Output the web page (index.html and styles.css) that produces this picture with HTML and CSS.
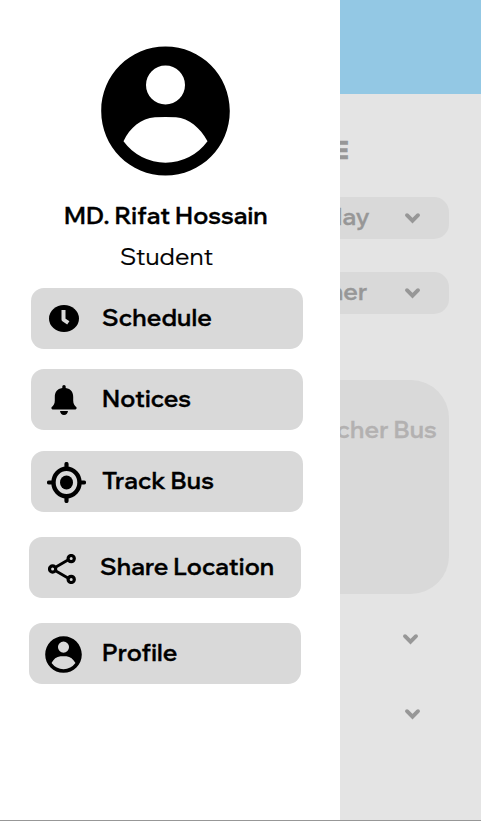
FILE: index.html
```html
<!DOCTYPE html>
<html lang="en">
<head>
<meta charset="utf-8">
<title>Bus Schedule</title>
<link rel="stylesheet" href="styles.css">
</head>
<body>
<svg width="0" height="0" class="defs">
  <symbol id="avatar" viewBox="0 0 129 130"><path fill-rule="evenodd" d="M64.5 .5C100 .5 128.8 29 128.800 65S100 129.500 64.500 129.500 .2 101 .2 65 29 .5 64.500 .5ZM64.500 19.500a19.500 19.500 0 1 0 0 39 19.500 19.500 0 1 0 0-39ZM54 71.300C40 72.500 29 81.500 22.500 95.300A52 52 0 0 0 106.500 95.300C99 81.500 88 72.500 75 71.300Q64.500 70.800 54 71.300Z"/></symbol>
  <symbol id="chevron" viewBox="0 0 17 12"><path d="M3 3.200 8.500 8.700 14 3.200" fill="none" stroke="currentColor" stroke-width="3.900" stroke-linecap="round"/></symbol>
</svg>
<div class="app">
  <aside class="drawer">
    <svg class="portrait"><use href="#avatar"/></svg>
    <h1 class="name">MD. Rifat Hossain</h1>
    <p class="role">Student</p>
    <nav class="menu">
      <a class="item schedule"><span class="icon"><svg width="30" height="27" viewBox="0 0 30 27"><ellipse cx="15" cy="13.500" rx="15" ry="13.500"/><path d="M14.500 5V14.600L19.300 17.800" fill="none" stroke="#d9d9d9" stroke-width="4" stroke-linejoin="round"/></svg></span><span class="label">Schedule</span></a>
      <a class="item notices"><span class="icon"><svg width="26" height="30" viewBox="0 0 26 30"><path d="M11.300 3V1.500Q11.300 0 13 0T14.700 1.500V3C20 3.700 22.200 7.500 22.200 12V15.500C22.200 19 23.500 20.500 25.500 22.300Q26 24.300 24.500 24.500H1.500Q0 24.300 .5 22.300C2.500 20.500 3.800 19 3.800 15.500V12C3.800 7.500 6 3.700 11.300 3ZM9 26H17Q16.300 30 13 30T9 26Z"/></svg></span><span class="label">Notices</span></a>
      <a class="item track"><span class="icon"><svg width="39" height="41" viewBox="0 0 39 41"><ellipse cx="19.500" cy="20.500" rx="13" ry="13.700" fill="none" stroke="#000" stroke-width="4.400"/><ellipse cx="19.500" cy="20.500" rx="6.500" ry="6.900"/><path d="M19.500 2V6M19.500 35V39M2 20.500H6M33 20.500H37" stroke="#000" stroke-width="4.200" stroke-linecap="round"/></svg></span><span class="label">Track Bus</span></a>
      <a class="item share"><span class="icon"><svg width="28" height="30" viewBox="0 0 28 30" fill="none" stroke="#000" stroke-width="3.200"><path d="M7.500 13.200 19.500 6.300M7.500 16.800 19.500 23.700" stroke-width="2.800"/><circle cx="4.600" cy="15" r="3.100"/><circle cx="23.200" cy="4.600" r="3.100"/><circle cx="23.200" cy="25.400" r="3.100"/></svg></span><span class="label">Share Location</span></a>
      <a class="item profile"><span class="icon"><svg width="37" height="37"><use href="#avatar"/></svg></span><span class="label">Profile</span></a>
    </nav>
  </aside>
  <main class="page">
    <header class="topbar"></header>
    <h2 class="title">E</h2>
    <div class="select"><span class="day">day</span><svg class="chevron"><use href="#chevron"/></svg></div>
    <div class="select second"><span class="person">her</span><svg class="chevron"><use href="#chevron"/></svg></div>
    <section class="card"><h3>cher Bus</h3></section>
    <div class="expander first"><svg class="chevron"><use href="#chevron"/></svg></div>
    <div class="expander"><svg class="chevron"><use href="#chevron"/></svg></div>
  </main>
</div>
</body>
</html>
```
FILE: styles.css
```css
* { box-sizing: border-box; }
body { margin: 0; font-family: "Wix Madefor Display", Figtree, Inter, sans-serif; font-size: 24px; letter-spacing: .14px; color: #000; }
h1, h2, h3, p { margin: 0; font-size: inherit; font-weight: 600; line-height: 30px; white-space: nowrap; }
h1, h2, h3, .label, .day, .person { -webkit-text-stroke: .35px currentColor; }
svg { display: block; flex: none; }
.defs { position: absolute; }
.app { display: grid; grid-template-columns: 340px 141px; width: 481px; height: 821px; border-bottom: 1px solid #979797; overflow: hidden; }
.drawer { display: flex; flex-direction: column; background: #fff; padding-top: 45px; }
.portrait { width: 129px; height: 130px; margin: .500px 0 0 100.500px; }
.name { margin: 24.500px 0 0 64px; }
.role { margin: 11px 0 0 120px; font-weight: 400; -webkit-text-stroke: .2px currentColor; }
.menu { display: flex; flex-direction: column; margin: 17px 0 0 29px; }
.item { display: flex; align-items: center; width: 272px; height: 61px; border-radius: 13px; background: #d9d9d9; font-weight: 600; line-height: 30px; white-space: nowrap; }
.icon { display: flex; justify-content: center; width: 39px; margin: 1px 16px 0 16px; }
.label { margin-bottom: 4px; }
.schedule, .notices, .track { margin-left: 2px; }
.schedule { margin-bottom: 20px; }
.notices { margin-bottom: 21px; }
.track { margin-bottom: 25px; }
.share { margin-bottom: 25px; }
.schedule .icon, .notices .icon { margin-left: 13.500px; margin-right: 18.500px; }
.schedule .icon { margin-top: 0; }
.share .icon { margin-left: 13.500px; margin-right: 18.500px; margin-top: 3px; }
.profile .icon { margin-left: 15px; margin-right: 19px; }
.page { display: flex; flex-direction: column; align-items: flex-end; background: #e4e4e4; color: #979797; overflow: hidden; }
.topbar { width: 141px; height: 94px; background: #93c8e4; flex: none; }
.title { margin: 41px 132px 0 0; font-weight: 800; }
.select { display: flex; align-items: center; justify-content: flex-end; width: 340px; height: 42px; flex: none; margin: 32px 32px 0 0; padding-right: 28px; border-radius: 15px; background: #d9d9d9; font-weight: 600; line-height: 30px; }
.second { margin-top: 33px; }
.chevron { width: 17px; height: 12px; }
.day { margin: 0 34.500px 5px 0; }
.person { margin: 0 36.500px 5px 0; }
.card { flex: none; width: 380px; height: 214px; margin: 66px 32px 0 0; padding: 34px 12px 0 0; border-radius: 38px; background: #d9d9d9; text-align: right; color: #b3b1b1; }
.expander { margin: 63px 60px 0 0; }
.first { margin: 39px 62px 0 0; }
```
